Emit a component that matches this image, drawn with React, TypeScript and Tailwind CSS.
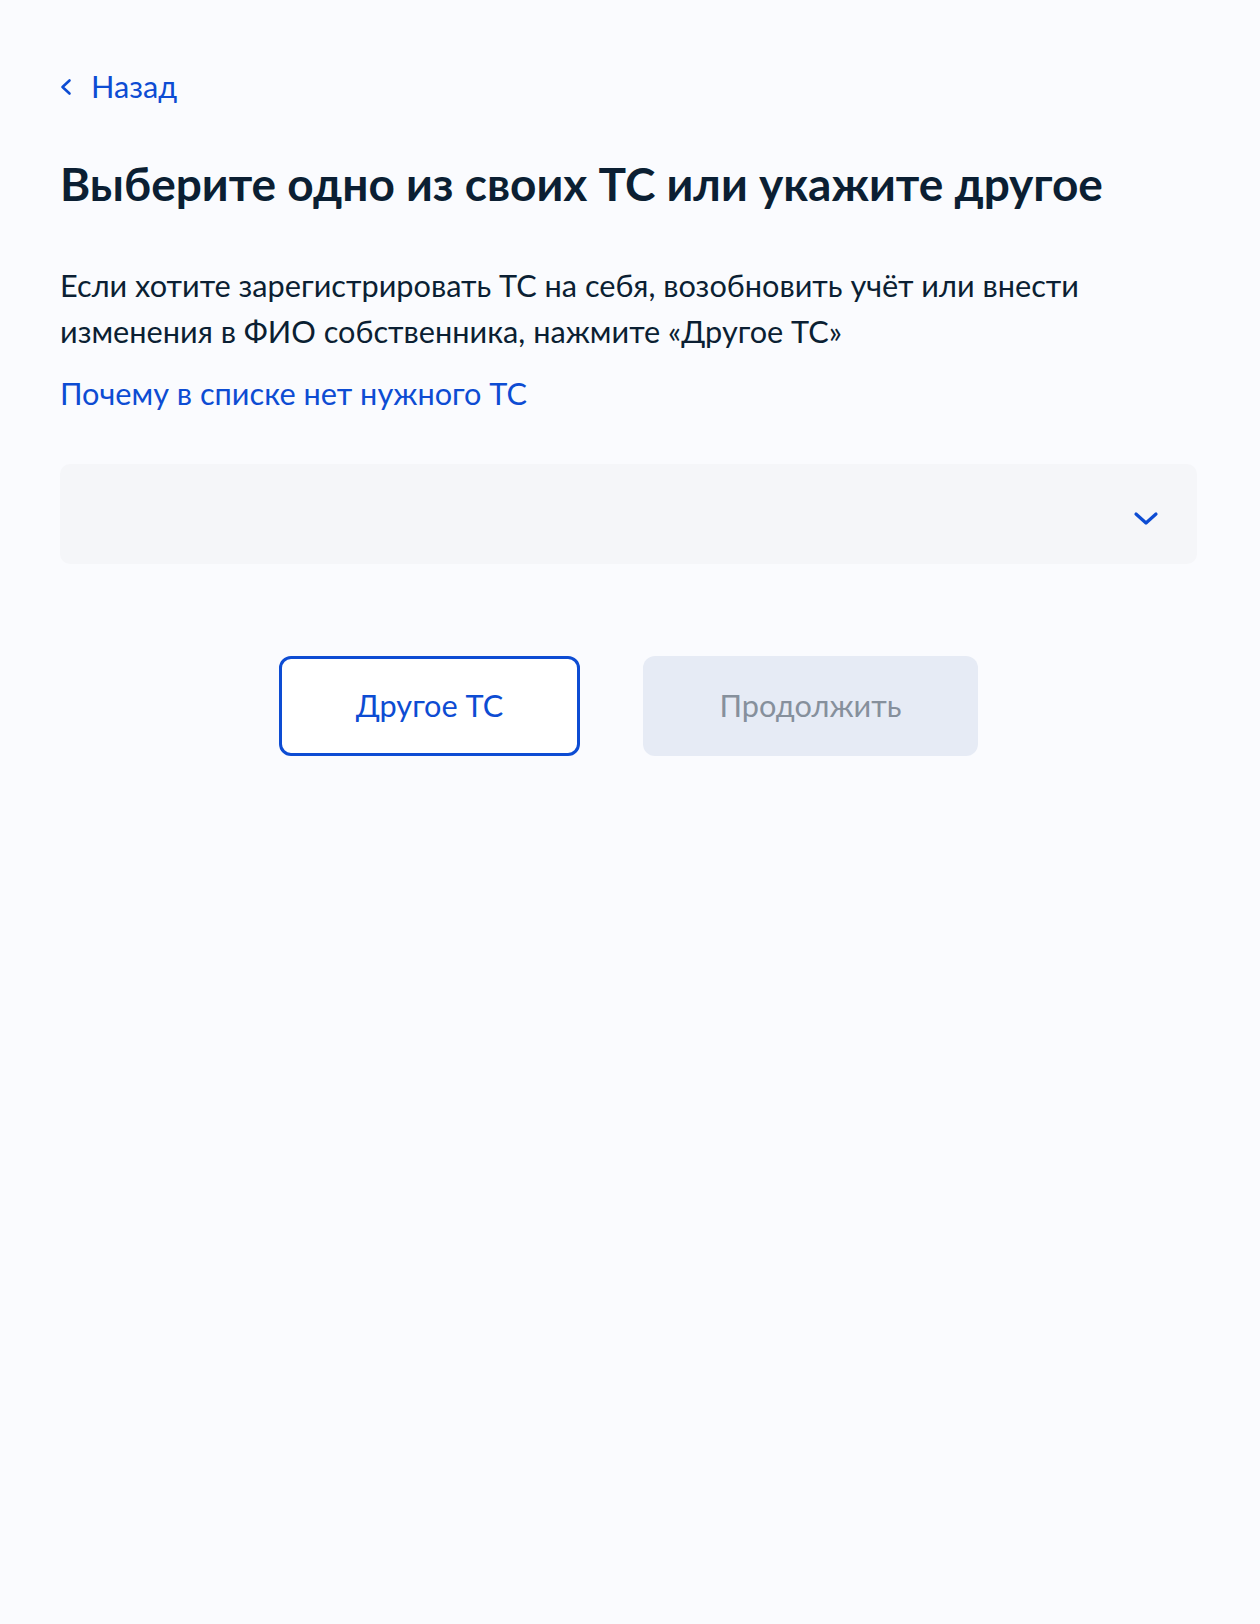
import React from 'react';

const ChevronLeft = () => (
  <svg width="12" height="20" viewBox="0 0 12 20" fill="none" className="shrink-0">
    <path d="M9.5 3.5L2.5 10L9.5 16.5" stroke="#0d4cd3" strokeWidth="2.6" strokeLinecap="round" strokeLinejoin="round" />
  </svg>
);

const ChevronDown = () => (
  <svg width="26" height="16" viewBox="0 0 26 16" fill="none">
    <path d="M3 3L13 12L23 3" stroke="#0d4cd3" strokeWidth="3.2" strokeLinecap="round" strokeLinejoin="round" />
  </svg>
);

export default function App() {
  return (
    <div className="min-h-[1624px] bg-[#fafbfe] text-[#0b1f33] font-['Lato','Noto_Sans',sans-serif]">
      <div className="pl-[60px] pr-[63px] pt-[70px]">
        <button className="flex items-center gap-[19px] text-[30.7px] leading-[34px] text-[#0d4cd3]">
          <ChevronLeft />
          <span>Назад</span>
        </button>

        <h1 className="mt-[50px] text-[46px] font-bold leading-[60px]">
          Выберите одно из своих ТС или укажите другое
        </h1>

        <p className="mt-[49px] max-w-[1080px] text-[30.7px] leading-[46px]">
          Если хотите зарегистрировать ТС на себя, возобновить учёт или внести изменения в ФИО собственника, нажмите «Другое ТС»
        </p>

        <a className="mt-[16px] block text-[30.7px] leading-[46px] text-[#0d4cd3]">
          Почему в списке нет нужного ТС
        </a>

        <div className="mt-[47px] flex h-[100px] items-center justify-end rounded-[10px] bg-[#f5f6f9] pr-[38px] pt-[10px]">
          <ChevronDown />
        </div>

        <div className="mt-[92px] flex justify-center gap-[63px]">
          <button className="h-[100px] w-[301px] rounded-[12px] border-[3px] border-[#0d4cd3] bg-white text-[30.7px] text-[#0d4cd3]">
            Другое ТС
          </button>
          <button className="h-[100px] w-[335px] rounded-[12px] bg-[#e6ebf5] text-[30.7px] text-[#86909c]">
            Продолжить
          </button>
        </div>
      </div>
    </div>
  );
}
